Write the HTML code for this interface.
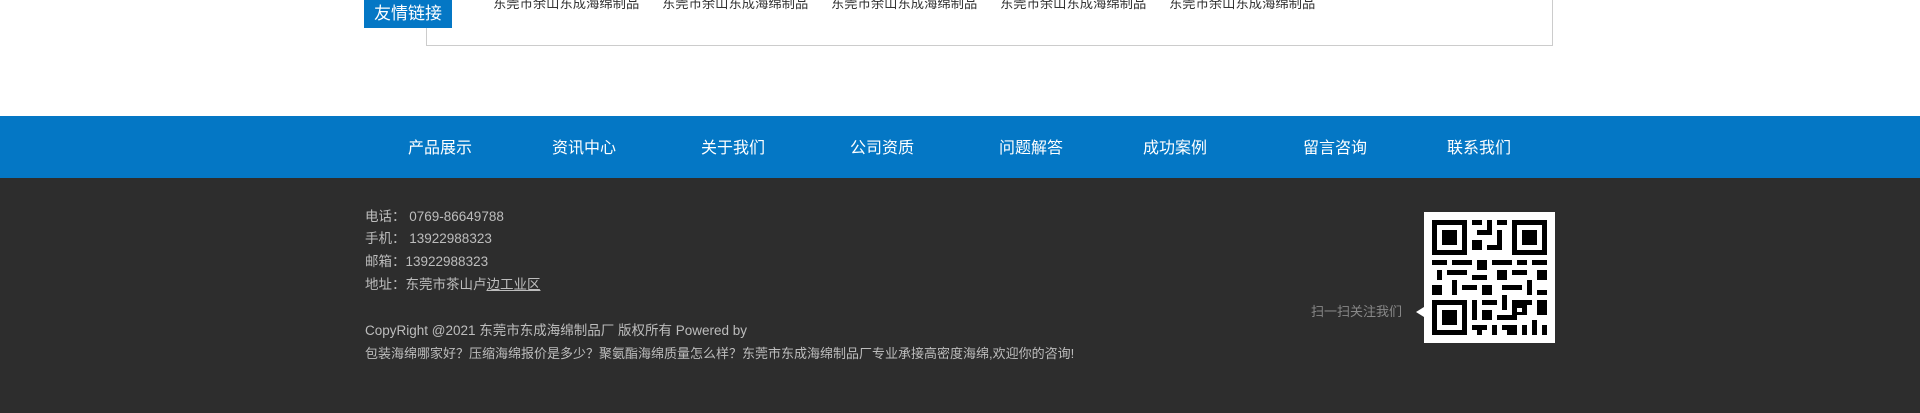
<!DOCTYPE html>
<html><head><meta charset="utf-8"><style>
*{margin:0;padding:0;box-sizing:border-box}
body{width:1920px;height:413px;background:#fff;position:relative;overflow:hidden;font-family:"Liberation Sans","Noto Sans CJK SC",sans-serif}
.abs{position:absolute;white-space:nowrap}
.fl{left:364px;top:0;width:88px;height:28px;background:#0477c5;color:#fff;font-size:17px;line-height:28px;text-align:center}
.box{left:426px;top:-2px;width:1127px;height:48px;border:1px solid #ccc;border-top:none}
.lk{top:-6px;font-size:13.3px;color:#333;line-height:20px}
.nav{left:0;top:116px;width:1920px;height:62px;background:#0477c5}
.nav span{position:absolute;top:2px;line-height:62px;color:#fff;font-size:16px;transform:translateX(-50%)}
.ft{left:0;top:178px;width:1920px;height:235px;background:#2d2d2d}
.in{left:365px;font-size:13.5px;color:#bdbdbd;line-height:20px}
</style></head><body>
<div class="abs box"></div>
<div class="abs fl">友情链接</div>
<div class="abs lk" style="left:493px">东莞市余山东成海绵制品</div>
<div class="abs lk" style="left:662px">东莞市余山东成海绵制品</div>
<div class="abs lk" style="left:831px">东莞市余山东成海绵制品</div>
<div class="abs lk" style="left:1000px">东莞市余山东成海绵制品</div>
<div class="abs lk" style="left:1169px">东莞市余山东成海绵制品</div>
<div class="abs nav">
<span style="left:440px">产品展示</span><span style="left:584px">资讯中心</span><span style="left:733px">关于我们</span><span style="left:882px">公司资质</span><span style="left:1031px">问题解答</span><span style="left:1175px">成功案例</span><span style="left:1335px">留言咨询</span><span style="left:1479px">联系我们</span>
</div>
<div class="abs ft"></div>
<div class="abs in" style="top:207px">电话：&nbsp;0769-86649788</div>
<div class="abs in" style="top:229px">手机：&nbsp;13922988323</div>
<div class="abs in" style="top:252px">邮箱：13922988323</div>
<div class="abs in" style="top:275px">地址：东莞市茶山卢<span style="text-decoration:underline">边工业区</span></div>
<div class="abs in" style="top:321px">CopyRight @2021 东莞市东成海绵制品厂 版权所有 Powered by</div>
<div class="abs in" style="top:344px;font-size:13px">包装海绵哪家好？压缩海绵报价是多少？聚氨酯海绵质量怎么样？东莞市东成海绵制品厂专业承接高密度海绵,欢迎你的咨询!</div>
<div class="abs" style="left:1311px;top:302px;font-size:13px;color:#888;line-height:20px">扫一扫关注我们</div>
<div class="abs" style="left:1416px;top:307px;width:0;height:0;border-top:5px solid transparent;border-bottom:5px solid transparent;border-right:8px solid #fff"></div>
<svg class="abs" style="left:1424px;top:212px" width="131" height="131" viewBox="0 0 131 131">
<rect width="131" height="131" fill="#fff"/>
<g transform="translate(8,8)" fill="#000">
<rect x="0" y="0" width="35" height="35"/><rect x="5" y="5" width="25" height="25" fill="#fff"/><rect x="10" y="10" width="15" height="15"/>
<rect x="80" y="0" width="35" height="35"/><rect x="85" y="5" width="25" height="25" fill="#fff"/><rect x="90" y="10" width="15" height="15"/>
<rect x="0" y="80" width="35" height="35"/><rect x="5" y="85" width="25" height="25" fill="#fff"/><rect x="10" y="90" width="15" height="15"/>
<rect x="40" y="0" width="10" height="5"/><rect x="55" y="0" width="5" height="10"/><rect x="65" y="0" width="10" height="5"/>
<rect x="45" y="10" width="15" height="5"/><rect x="65" y="10" width="5" height="15"/><rect x="40" y="20" width="10" height="10"/><rect x="55" y="25" width="15" height="5"/>
<rect x="0" y="40" width="15" height="5"/><rect x="20" y="40" width="20" height="5"/><rect x="45" y="40" width="10" height="10"/><rect x="60" y="40" width="20" height="5"/><rect x="85" y="40" width="10" height="5"/><rect x="100" y="40" width="15" height="5"/>
<rect x="5" y="50" width="5" height="10"/><rect x="15" y="50" width="20" height="5"/><rect x="40" y="55" width="15" height="5"/><rect x="65" y="50" width="10" height="10"/><rect x="80" y="50" width="15" height="5"/><rect x="105" y="50" width="10" height="10"/>
<rect x="0" y="65" width="10" height="10"/><rect x="20" y="60" width="5" height="15"/><rect x="30" y="65" width="15" height="5"/><rect x="50" y="65" width="10" height="10"/><rect x="70" y="65" width="20" height="5"/><rect x="95" y="60" width="5" height="15"/><rect x="105" y="70" width="10" height="5"/>
<rect x="40" y="80" width="5" height="20"/><rect x="50" y="80" width="15" height="5"/><rect x="70" y="75" width="5" height="15"/><rect x="80" y="80" width="20" height="5"/><rect x="105" y="80" width="10" height="15"/>
<rect x="50" y="90" width="10" height="10"/><rect x="65" y="95" width="20" height="5"/><rect x="80" y="85" width="15" height="10"/><rect x="85" y="88" width="5" height="4" fill="#fff"/>
<rect x="40" y="105" width="15" height="5"/><rect x="60" y="105" width="5" height="10"/><rect x="70" y="105" width="15" height="5"/><rect x="90" y="105" width="5" height="10"/><rect x="100" y="100" width="5" height="15"/><rect x="45" y="110" width="5" height="5"/><rect x="75" y="110" width="10" height="5"/><rect x="110" y="105" width="5" height="10"/>
</g></svg>
</body></html>
